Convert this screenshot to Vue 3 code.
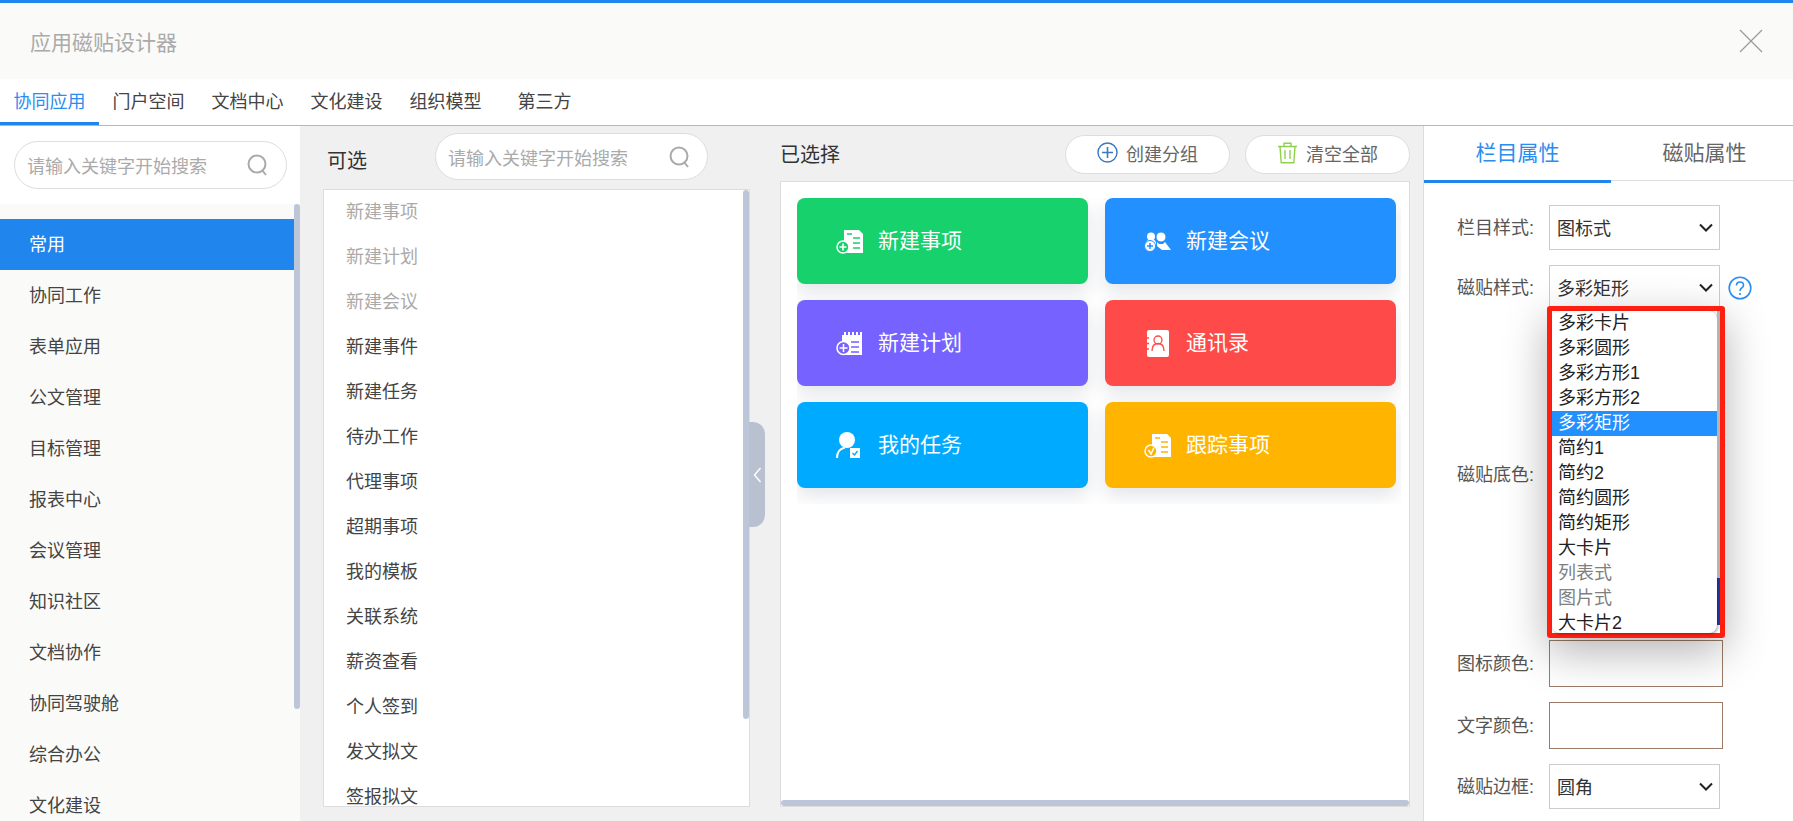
<template>
  <div class="designer">
    <header class="top">
      <h1 class="top-title">应用磁贴设计器</h1>
      <svg class="close" width="24" height="24" viewBox="0 0 24 24">
        <path d="M1 1l22 22M23 1L1 23" stroke="#999" stroke-width="1.2" fill="none" />
      </svg>
    </header>

    <nav class="tabs">
      <span v-for="(t, i) in navTabs" :key="t" class="tab" :class="{ on: i === 0 }">{{ t }}</span>
    </nav>

    <div class="body">
      <!-- 左側分類 -->
      <aside class="side">
        <div class="side-search">
          <div class="search">
            <span>请输入关键字开始搜索</span>
            <svg width="21" height="22" viewBox="0 0 21 22">
              <circle cx="10" cy="10" r="8.5" stroke="#aaa" stroke-width="2" fill="none" />
              <path d="M15 16l4 5" stroke="#aaa" stroke-width="2" fill="none" />
            </svg>
          </div>
        </div>
        <ul class="menu">
          <li v-for="(m, i) in menus" :key="m" :class="{ on: i === 0 }">{{ m }}</li>
        </ul>
        <div class="side-bar"></div>
      </aside>

      <!-- 可选 -->
      <section class="avail">
        <div class="avail-head">
          <span class="head-title avail-title">可选</span>
          <div class="search avail-search">
            <span>请输入关键字开始搜索</span>
            <svg width="21" height="22" viewBox="0 0 21 22">
              <circle cx="10" cy="10" r="8.5" stroke="#aaa" stroke-width="2" fill="none" />
              <path d="M15 16l4 5" stroke="#aaa" stroke-width="2" fill="none" />
            </svg>
          </div>
        </div>
        <div class="avail-list">
          <div v-for="(a, i) in items" :key="a" class="avail-item" :class="{ used: i < 3 }">{{ a }}</div>
          <div class="list-bar"></div>
        </div>
        <div class="handle">
          <svg width="9" height="16" viewBox="0 0 9 16">
            <path d="M7.5 1L1.5 8l6 7" stroke="#fff" stroke-width="1.4" fill="none" />
          </svg>
        </div>
      </section>

      <!-- 已选择 -->
      <section class="chosen">
        <div class="chosen-head">
          <span class="head-title chosen-title">已选择</span>
          <button class="pill">
            <svg width="21" height="21" viewBox="0 0 21 21">
              <circle cx="10.5" cy="10.5" r="9.5" stroke="#3b78c0" stroke-width="1.4" fill="none" />
              <path d="M10.5 5v11M5 10.5h11" stroke="#3b78c0" stroke-width="1.6" fill="none" />
            </svg>
            创建分组
          </button>
          <button class="pill">
            <svg width="21" height="22" viewBox="0 0 21 22">
              <path d="M1 4.5h19M7 4.5V1.2h7v3.3M3 4.5l1.2 16.3h12.6L18 4.5M8 8v9M13 8v9" stroke="#8fd14f" stroke-width="1.4" fill="none" />
            </svg>
            清空全部
          </button>
        </div>
        <div class="chosen-panel">
          <div class="cards">
            <div v-for="c in cards" :key="c.name" class="card" :style="{ background: c.color }">
              <svg class="card-icon" width="27" height="27" viewBox="0 0 27 27">
                <template v-if="c.icon === 'item' || c.icon === 'track'">
                  <path d="M8 2h15l4 4v19H8z" fill="#fff" />
                  <path d="M11 6h5M17 10h7M17 15h7M17 20h7" :stroke="c.color" stroke-width="1.6" />
                  <circle cx="7" cy="19" r="6" :fill="c.color" stroke="#fff" stroke-width="1.5" />
                  <path v-if="c.icon === 'item'" d="M7 15.5v7M3.5 19h7" stroke="#fff" stroke-width="1.6" />
                  <path v-else d="M4.5 18l2.5 4 3-6.5" stroke="#fff" stroke-width="1.5" fill="none" />
                </template>
                <template v-else-if="c.icon === 'meeting'">
                  <circle cx="7" cy="8.5" r="4" fill="#fff" />
                  <path d="M2 18v-3c0-2 2-4 5-4s5 2 5 4v3z" fill="#fff" />
                  <circle cx="17" cy="9" r="5" fill="#fff" :stroke="c.color" stroke-width="1" />
                  <path d="M13 14l2 2h4l2-2 6 8h-9l-5-4z" fill="#fff" />
                  <circle cx="6" cy="18" r="5.5" fill="#fff" :stroke="c.color" stroke-width="1" />
                  <path d="M6 15v6M3 18h6" :stroke="c.color" stroke-width="1.5" />
                </template>
                <template v-else-if="c.icon === 'plan'">
                  <path d="M6 5h20v20H6z" fill="#fff" />
                  <path d="M9 2v5M13 2v5M17 2v5M21 2v5M25 2v5" stroke="#fff" stroke-width="2" />
                  <path d="M15 12h8M15 17h8M15 22h8" :stroke="c.color" stroke-width="1.5" />
                  <circle cx="7.5" cy="18" r="6.5" :fill="c.color" stroke="#fff" stroke-width="1.5" />
                  <path d="M7.5 14v8M3.5 18h8" stroke="#fff" stroke-width="1.5" />
                </template>
                <template v-else-if="c.icon === 'contact'">
                  <rect x="3" y="0" width="22" height="27" rx="2" fill="#fff" />
                  <path d="M0 8h5M0 13.5h5M0 19h5" :stroke="c.color" stroke-width="1.5" />
                  <circle cx="14" cy="10" r="4" fill="none" :stroke="c.color" stroke-width="1.3" />
                  <path d="M8 21c0-5 2.5-7.5 6-7.5s6 2.5 6 7.500" fill="none" :stroke="c.color" stroke-width="1.3" />
                </template>
                <template v-else>
                  <circle cx="11" cy="8" r="8" fill="#fff" />
                  <path d="M1 26c0-6 3-9.500 8-10.500" stroke="#fff" stroke-width="2" fill="none" />
                  <rect x="14" y="16" width="10" height="10" fill="#fff" />
                  <path d="M16.500 21l2 2 3-4" :stroke="c.color" stroke-width="1.4" fill="none" />
                </template>
              </svg>
              <span class="card-name">{{ c.name }}</span>
            </div>
          </div>
          <div class="chosen-bar"></div>
        </div>
      </section>

      <!-- 屬性面板 -->
      <aside class="props">
        <div class="prop-tabs">
          <span class="prop-tab on">栏目属性</span>
          <span class="prop-tab">磁贴属性</span>
        </div>
        <div class="form">
          <div class="row">
            <label>栏目样式:</label>
            <div class="select">
              <span class="select-text">图标式</span>
              <svg width="14" height="9" viewBox="0 0 14 9"><path d="M1 1.5l6 6 6-6" stroke="#222" stroke-width="2" fill="none" /></svg>
            </div>
          </div>
          <div class="row">
            <label>磁贴样式:</label>
            <div class="select">
              <span class="select-text">多彩矩形</span>
              <svg width="14" height="9" viewBox="0 0 14 9"><path d="M1 1.5l6 6 6-6" stroke="#222" stroke-width="2" fill="none" /></svg>
              <div class="popup">
                <ul class="popup-list">
                  <li
                    v-for="o in styleOptions"
                    :key="o.text"
                    :class="{ on: o.text === '多彩矩形', off: o.off }"
                  >{{ o.text }}</li>
                </ul>
                <div class="popup-edge"></div>
              </div>
            </div>
            <svg class="help" width="24" height="24" viewBox="0 0 24 24">
              <circle cx="12" cy="12" r="10.8" stroke="#2b8df0" stroke-width="1.6" fill="none" />
              <path d="M8.5 9.5c0-2.200 1.500-3.500 3.500-3.500s3.500 1.300 3.500 3.200c0 2.800-3.500 2.800-3.500 5.800" stroke="#2b8df0" stroke-width="1.6" fill="none" />
              <circle cx="12" cy="18" r="1.1" fill="#2b8df0" />
            </svg>
          </div>
          <div class="row">
            <label>磁贴底色:</label>
            <div class="swatches">
              <div class="swatch first"></div>
              <div class="swatch"></div>
              <div class="swatch"></div>
              <div class="swatch"></div>
              <div class="swatch dark"></div>
            </div>
          </div>
          <div class="row">
            <label>图标颜色:</label>
            <div class="color-box"></div>
          </div>
          <div class="row">
            <label>文字颜色:</label>
            <div class="color-box"></div>
          </div>
          <div class="row">
            <label>磁贴边框:</label>
            <div class="select">
              <span class="select-text">圆角</span>
              <svg width="14" height="9" viewBox="0 0 14 9"><path d="M1 1.5l6 6 6-6" stroke="#222" stroke-width="2" fill="none" /></svg>
            </div>
          </div>
        </div>
      </aside>
    </div>
  </div>
</template>

<script setup>
const navTabs = ['协同应用', '门户空间', '文档中心', '文化建设', '组织模型', '第三方']

const menus = [
  '常用', '协同工作', '表单应用', '公文管理', '目标管理', '报表中心',
  '会议管理', '知识社区', '文档协作', '协同驾驶舱', '综合办公', '文化建设',
]

const items = [
  '新建事项', '新建计划', '新建会议', '新建事件', '新建任务', '待办工作', '代理事项',
  '超期事项', '我的模板', '关联系统', '薪资查看', '个人签到', '发文拟文', '签报拟文',
]

const cards = [
  { name: '新建事项', color: '#16d16c', icon: 'item' },
  { name: '新建会议', color: '#2290ff', icon: 'meeting' },
  { name: '新建计划', color: '#7562ff', icon: 'plan' },
  { name: '通讯录', color: '#ff4a4a', icon: 'contact' },
  { name: '我的任务', color: '#00aaff', icon: 'task' },
  { name: '跟踪事项', color: '#ffb400', icon: 'track' },
]

const styleOptions = [
  { text: '多彩卡片' }, { text: '多彩圆形' }, { text: '多彩方形1' }, { text: '多彩方形2' },
  { text: '多彩矩形' }, { text: '简约1' }, { text: '简约2' }, { text: '简约圆形' },
  { text: '简约矩形' }, { text: '大卡片' }, { text: '列表式', off: true },
  { text: '图片式', off: true }, { text: '大卡片2' },
]
</script>

<style>
html, body {
  margin: 0;
  overflow: hidden;
}
</style>

<style scoped>
.designer {
  height: 821px;
  display: flex;
  flex-direction: column;
  overflow: hidden;
  border-top: 3px solid #2185ee;
  box-sizing: border-box;
  background: #f0f0f0;
  font-family: "Liberation Sans", "Noto Sans CJK SC", sans-serif;
  font-size: 18px;
  color: #333;
}

.top {
  height: 76px;
  flex: none;
  display: flex;
  align-items: center;
  justify-content: space-between;
  padding: 0 30px;
  background: #fafaf8;
  box-sizing: border-box;
}

.top-title {
  margin: 0;
  font-size: 21px;
  font-weight: 400;
  color: #aaa;
}

.tabs {
  height: 47px;
  flex: none;
  display: flex;
  box-sizing: border-box;
  background: #fff;
  border-bottom: 1px solid #8cc0f5;
}

.tab {
  width: 99px;
  height: 46px;
  box-sizing: border-box;
  line-height: 46px;
  text-align: center;
  color: #444;
}

.tab.on {
  color: #2b8df0;
  border-bottom: 3px solid #2185ee;
}

.body {
  flex: 1;
  min-height: 0;
  display: flex;
}

/* 左側 */
.side {
  width: 300px;
  flex: none;
  position: relative;
  display: flex;
  flex-direction: column;
  overflow: hidden;
}

.side-search {
  height: 78px;
  flex: none;
  box-sizing: border-box;
  padding: 15px 13px 0 14px;
  background: #fff;
}

.search {
  height: 48px;
  display: flex;
  align-items: center;
  justify-content: space-between;
  box-sizing: border-box;
  padding: 0 18px 0 12px;
  background: #fff;
  border: 1px solid #ddd;
  border-radius: 24px;
  color: #aaa;
}

.menu {
  flex: 1;
  margin: 0;
  padding: 15px 0 0;
  list-style: none;
  background: #fafaf8;
}

.menu li {
  width: 294px;
  height: 51px;
  line-height: 53px;
  box-sizing: border-box;
  padding-left: 29px;
  color: #444;
}

.menu li.on {
  background: #2185ee;
  color: #fff;
}

.side-bar {
  position: absolute;
  left: 294px;
  top: 78px;
  width: 6px;
  height: 505px;
  border-radius: 3px;
  background: #bcc6d8;
}

/* 可选 */
.avail {
  width: 427px;
  flex: none;
  margin-left: 23px;
  position: relative;
}

.avail-head {
  height: 63px;
  display: flex;
  align-items: flex-start;
}

.head-title {
  font-size: 20px;
  line-height: 30px;
  color: #333;
}

.avail-title {
  margin: 20px 0 0 4px;
}

.avail-search {
  width: 273px;
  height: 47px;
  margin: 7px 42px 0 auto;
  padding-right: 17px;
}

.avail-list {
  position: relative;
  height: 618px;
  box-sizing: border-box;
  border: 1px solid #ddd;
  background: #fff;
  overflow: hidden;
}

.avail-item {
  height: 45px;
  line-height: 45px;
  padding-left: 22px;
  color: #444;
}

.avail-item.used {
  color: #aaa;
}

.list-bar {
  position: absolute;
  right: 0;
  top: 0;
  width: 6px;
  height: 529px;
  border-radius: 3px;
  background: #bcc6d8;
}

.handle {
  position: absolute;
  left: calc(100% - 1px);
  top: 296px;
  width: 16px;
  height: 105px;
  display: flex;
  align-items: center;
  justify-content: center;
  border-radius: 0 12px 12px 0;
  background: #b9c1d1;
}

/* 已选择 */
.chosen {
  width: 631px;
  flex: none;
  margin-left: 30px;
}

.chosen-head {
  height: 55px;
  display: flex;
  align-items: flex-start;
  gap: 15px;
  padding-right: 1px;
}

.chosen-title {
  margin: 14px auto 0 0;
}

.pill {
  width: 165px;
  height: 39px;
  margin-top: 9px;
  display: flex;
  align-items: center;
  justify-content: center;
  gap: 8px;
  padding: 0 0 4px;
  border: 1px solid #ddd;
  border-radius: 20px;
  background: #fff;
  font: inherit;
  color: #666;
}

.chosen-panel {
  position: relative;
  height: 626px;
  margin-right: 1px;
  box-sizing: border-box;
  border: 1px solid #ddd;
  background: #fff;
  padding: 16px 0 0 16px;
}

.cards {
  display: grid;
  grid-template-columns: 291px 291px;
  grid-auto-rows: 86px;
  gap: 16px 17px;
  width: 604px;
  height: 306px;
  overflow: hidden;
  padding-bottom: 16px;
  box-sizing: border-box;
}

.card {
  display: flex;
  align-items: center;
  gap: 15px;
  padding-left: 39px;
  border-radius: 8px;
  box-shadow: 0 8px 18px rgba(60, 70, 100, 0.14);
  font-size: 21px;
  color: #fff;
}

.card-icon {
  flex: none;
}

.card-name {
  padding-bottom: 4px;
}

.chosen-bar {
  position: absolute;
  left: 0;
  right: 0;
  bottom: 0;
  height: 6px;
  border-radius: 3px;
  background: #bcc6d8;
}

/* 屬性面板 */
.props {
  flex: 1;
  margin-left: 12px;
  background: #fff;
  border-left: 1px solid #ddd;
  position: relative;
}

.prop-tabs {
  height: 55px;
  display: flex;
  box-sizing: border-box;
  border-bottom: 1px solid #ddd;
}

.prop-tab {
  width: 187px;
  height: 57px;
  line-height: 54px;
  box-sizing: border-box;
  text-align: center;
  font-size: 21px;
  color: #666;
}

.prop-tab.on {
  color: #2b8df0;
  border-bottom: 3px solid #2185ee;
}

.form {
  padding: 24px 0 0 33px;
  display: flex;
  flex-direction: column;
  gap: 15px;
}

.row {
  display: flex;
  align-items: center;
  position: relative;
}

.row label {
  width: 92px;
  flex: none;
  padding-bottom: 4px;
  color: #555;
}

.select {
  position: relative;
  width: 171px;
  height: 45px;
  display: flex;
  align-items: center;
  justify-content: space-between;
  box-sizing: border-box;
  padding: 0 6px 0 7px;
  border: 1px solid #ccc;
  background: #fff;
}

.select-text {
  padding-bottom: 2px;
}

.help {
  margin-left: 8px;
}

.swatches {
  display: flex;
  flex-direction: column;
  gap: 9px;
}

.swatch {
  width: 174px;
  height: 47px;
  box-sizing: border-box;
  border: 1px solid #ddd;
  background: #fff;
}

.swatch.first {
  border-color: #2b6cc8;
}

.swatch.dark {
  margin-top: 29px;
  background: #1a3fb0;
  border-color: #1a3fb0;
}

.color-box {
  width: 174px;
  height: 47px;
  box-sizing: border-box;
  border: 1px solid #9c7a66;
  background: #fff;
}

/* 下拉選單 */
.popup {
  position: absolute;
  left: -3px;
  top: 40px;
  z-index: 5;
  width: 178px;
  height: 332px;
  box-sizing: border-box;
  display: flex;
  align-items: flex-start;
  border: 5px solid #ff1f10;
  border-radius: 3px;
  box-shadow: 0 14px 44px rgba(0, 0, 0, 0.3);
}

.popup-list {
  width: 165px;
  height: 322px;
  flex: none;
  margin: 0;
  padding: 0;
  list-style: none;
  overflow: hidden;
  background: #fff;
  border-radius: 8px;
  box-shadow: 1px 1px 3px rgba(0, 0, 0, 0.35);
}

.popup-list li {
  height: 25px;
  line-height: 25px;
  padding-left: 6px;
  color: #222;
}

.popup-list li.on {
  background: #2290ff;
  color: #fff;
}

.popup-list li.off {
  color: #808080;
}

.popup-edge {
  width: 3px;
  height: 267px;
  flex: none;
  background: #b5b5b5;
}
</style>
